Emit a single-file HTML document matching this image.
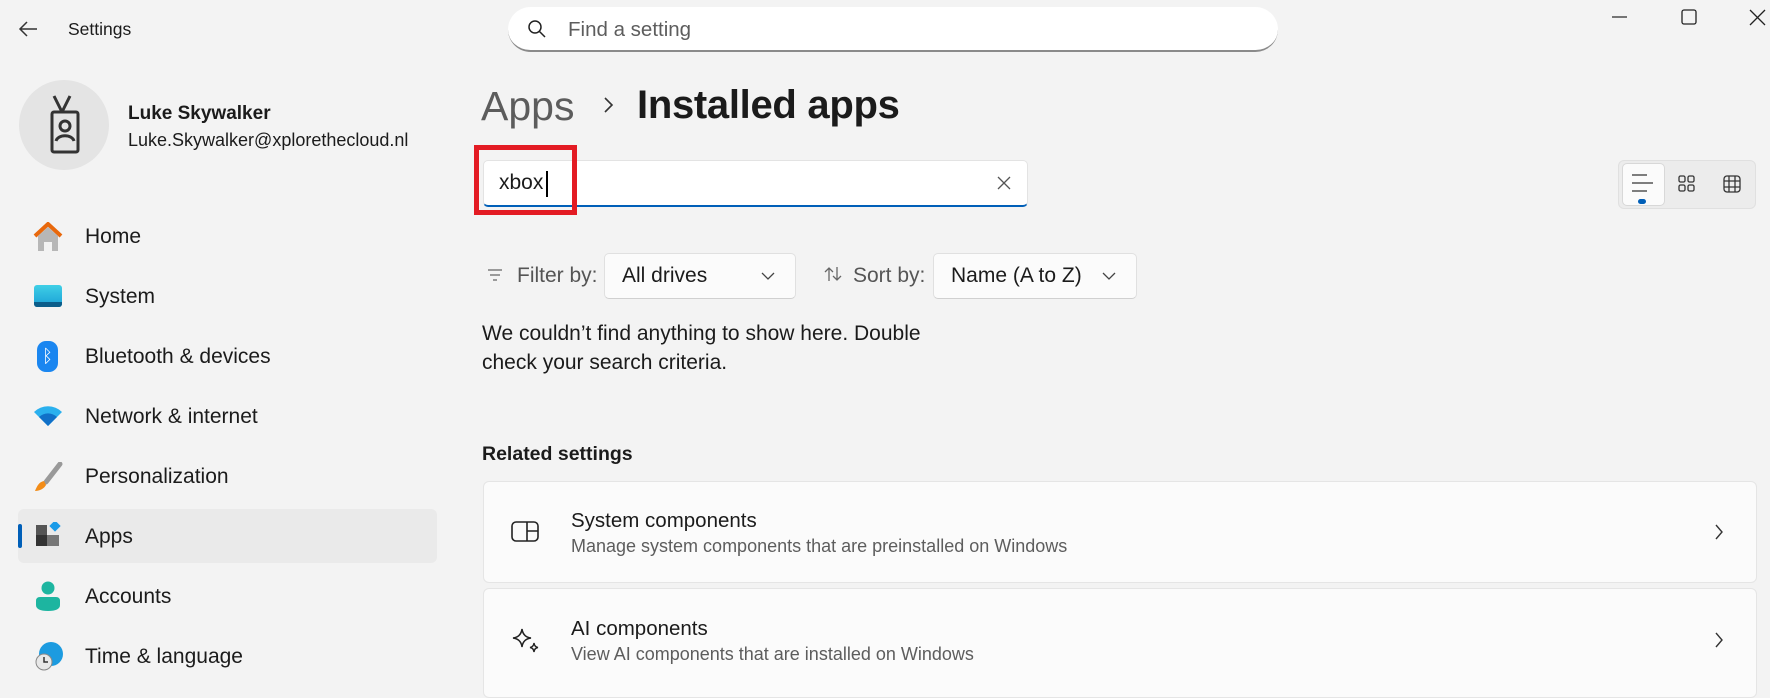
<!DOCTYPE html>
<html><head><meta charset="utf-8"><style>
*{margin:0;padding:0;box-sizing:border-box}
body{width:1770px;height:688px;overflow:hidden;background:#f3f3f3;font-family:"Liberation Sans",sans-serif;color:#1b1b1b;position:relative}
.a{position:absolute;white-space:nowrap}
.nav{position:absolute;left:85px;font-size:21px;color:#1b1b1b}
.card{position:absolute;left:483px;width:1274px;background:#fbfbfb;border:1px solid #e5e5e5;border-radius:6px}
.dd{position:absolute;top:253px;height:46px;background:#fbfbfb;border:1px solid #e0e0e0;border-bottom-color:#d0d0d0;border-radius:5px;font-size:21px}
</style></head><body>
<svg class="a" style="left:17px;top:20px" width="22" height="18" viewBox="0 0 22 18"><path d="M20 9H3M10 2L3 9l7 7" stroke="#333" stroke-width="1.5" fill="none"/></svg>
<div class="a" style="left:68px;top:19px;font-size:17.5px">Settings</div>
<div class="a" style="left:508px;top:7px;width:770px;height:45px;background:#fff;border-radius:23px;border-bottom:2px solid #8a8a8a"></div>
<svg class="a" style="left:527px;top:19px" width="20" height="20" viewBox="0 0 20 20"><circle cx="8" cy="8" r="6" stroke="#222" stroke-width="1.5" fill="none"/><path d="M12.5 12.5L18 18" stroke="#222" stroke-width="1.5"/></svg>
<div class="a" style="left:568px;top:18px;font-size:20.5px;color:#5d5d5d">Find a setting</div>
<svg class="a" style="left:1610px;top:8px" width="160" height="20"><path d="M2 9h15" stroke="#222" stroke-width="1.2"/><rect x="72" y="2" width="14" height="14" rx="2" stroke="#222" stroke-width="1.3" fill="none"/><path d="M140 2l15 15M155 2l-15 15" stroke="#222" stroke-width="1.3"/></svg>
<div class="a" style="left:19px;top:80px;width:90px;height:90px;border-radius:50%;background:#e4e4e4"></div>
<svg class="a" style="left:45px;top:94px" width="38" height="62" viewBox="0 0 36 62"><path d="M8 2l8 16M24 2l-8 16" stroke="#333" stroke-width="3" fill="none"/><rect x="6" y="18" width="26" height="40" rx="2" stroke="#333" stroke-width="3" fill="none"/><circle cx="19" cy="32" r="5" stroke="#333" stroke-width="3" fill="none"/><path d="M10 47c2-7 16-7 18 0" stroke="#333" stroke-width="3" fill="none"/></svg>
<div class="a" style="left:128px;top:103px;font-size:19px;font-weight:bold">Luke Skywalker</div>
<div class="a" style="left:128px;top:130px;font-size:18px">Luke.Skywalker@xplorethecloud.nl</div>
<div class="a" style="left:18px;top:509px;width:419px;height:54px;background:#eaeaea;border-radius:6px"></div>
<div class="a" style="left:18px;top:524px;width:4px;height:24px;background:#005fb8;border-radius:2px"></div>
<svg class="a" style="left:33px;top:222px" width="30" height="30"><path d="M2 14L15 2l13 12" stroke="#e8680c" stroke-width="4" fill="none"/><path d="M5 14l10-9 10 9v15H19v-9h-8v9H5z" fill="#b7b7b7"/></svg>
<div class="a" style="left:34px;top:285px;width:28px;height:22px;border-radius:3px;background:linear-gradient(#3fcfe6,#1a9fd6)"></div><div class="a" style="left:34px;top:302px;width:28px;height:5px;background:#0b5d8a;border-radius:0 0 3px 3px"></div>
<div class="a" style="left:37px;top:341px;width:21px;height:31px;border-radius:9px;background:#1a86f0;color:#fff;font-size:18px;text-align:center;line-height:31px">ᛒ</div>
<svg class="a" style="left:33px;top:405px" width="30" height="22"><path d="M1 7a20 20 0 0 1 28 0L15 21z" fill="#2ab0ee"/><path d="M6 12a13 13 0 0 1 18 0L15 21z" fill="#1070c8"/></svg>
<svg class="a" style="left:33px;top:462px" width="30" height="30"><path d="M27 2L13 20" stroke="#999" stroke-width="5" stroke-linecap="round"/><path d="M11 19c-5 1-7 5-9 10 4 0 9-2 11-6z" fill="#f28c18"/></svg>
<svg class="a" style="left:36px;top:522px" width="26" height="26"><rect x="0" y="3" width="11" height="10" fill="#555"/><rect x="0" y="13" width="11" height="11" fill="#333"/><rect x="11" y="13" width="12" height="11" fill="#777"/><rect x="15" y="0" width="8" height="8" transform="rotate(45 19 4)" fill="#1a9be8"/></svg>
<svg class="a" style="left:36px;top:581px" width="24" height="32"><circle cx="12" cy="7" r="6.5" fill="#1db5a0"/><path d="M0 20q0-4 4-4h16q4 0 4 4v4q0 6-12 6T0 24z" fill="#1db5a0"/></svg>
<svg class="a" style="left:33px;top:641px" width="30" height="30"><circle cx="18" cy="13" r="12" fill="#1c9be0"/><circle cx="11" cy="21" r="8" fill="#e8e8e8" stroke="#888"/><path d="M11 16v5h4" stroke="#333" stroke-width="1.5" fill="none"/></svg>
<div class="nav" style="top:225px">Home</div>
<div class="nav" style="top:285px">System</div>
<div class="nav" style="top:345px">Bluetooth &amp; devices</div>
<div class="nav" style="top:405px">Network &amp; internet</div>
<div class="nav" style="top:465px">Personalization</div>
<div class="nav" style="top:525px">Apps</div>
<div class="nav" style="top:585px">Accounts</div>
<div class="nav" style="top:645px">Time &amp; language</div>
<div class="a" style="left:481px;top:83px;font-size:41px;color:#5c5c5c">Apps</div>
<svg class="a" style="left:603px;top:96px" width="12" height="18"><path d="M2 2l7 7-7 7" stroke="#333" stroke-width="1.6" fill="none"/></svg>
<div class="a" style="left:637px;top:83px;font-size:40px;font-weight:bold;letter-spacing:-0.3px">Installed apps</div>
<div class="a" style="left:483px;top:160px;width:545px;height:47px;background:#fff;border:1px solid #e3e3e3;border-radius:5px;border-bottom:2px solid #005fb8"></div>
<div class="a" style="left:499px;top:171px;font-size:21px">xbox</div>
<div class="a" style="left:546px;top:171px;width:1.5px;height:26px;background:#000"></div>
<svg class="a" style="left:997px;top:176px" width="14" height="14"><path d="M1 1l12 12M13 1L1 13" stroke="#555" stroke-width="1.3"/></svg>
<div class="a" style="left:474px;top:145px;width:103px;height:70px;border:5px solid #e31b23"></div>
<div class="a" style="left:1618px;top:160px;width:138px;height:49px;background:#ececec;border:1px solid #e0e0e0;border-radius:6px"></div>
<div class="a" style="left:1622px;top:163px;width:43px;height:43px;background:#fbfbfb;border:1px solid #d8d8d8;border-radius:5px"></div>
<svg class="a" style="left:1630px;top:173px" width="120" height="34"><path d="M2 2h15M2 10h21M2 18h15" stroke="#333" stroke-width="1.3"/><rect x="8" y="26" width="8" height="5" rx="2.5" fill="#005fb8"/><g fill="none" stroke="#333" stroke-width="1.3"><rect x="49" y="3" width="6" height="6" rx="1.5"/><rect x="58" y="3" width="6" height="6" rx="1.5"/><rect x="49" y="12" width="6" height="6" rx="1.5"/><rect x="58" y="12" width="6" height="6" rx="1.5"/><rect x="94" y="3" width="16" height="16" rx="3"/><path d="M99 3v16M105 3v16M94 8h16M94 14h16"/></g></svg>
<svg class="a" style="left:487px;top:268px" width="16" height="14"><path d="M1 2h14M3 7h10M6 12h4" stroke="#666" stroke-width="1.3"/></svg>
<div class="a" style="left:517px;top:264px;font-size:21px;color:#555">Filter by:</div>
<div class="dd" style="left:604px;width:192px"><span class="a" style="left:17px;top:10px">All drives</span><svg class="a" style="left:156px;top:18px" width="14" height="9"><path d="M1 1l6 6 6-6" stroke="#444" stroke-width="1.3" fill="none"/></svg></div>
<svg class="a" style="left:824px;top:266px" width="18" height="16"><path d="M5 15V2M1 6l4-4 4 4M13 1v13M9 10l4 4 4-4" stroke="#666" stroke-width="1.3" fill="none"/></svg>
<div class="a" style="left:853px;top:264px;font-size:21px;color:#555">Sort by:</div>
<div class="dd" style="left:933px;width:204px"><span class="a" style="left:17px;top:10px">Name (A to Z)</span><svg class="a" style="left:168px;top:18px" width="14" height="9"><path d="M1 1l6 6 6-6" stroke="#444" stroke-width="1.3" fill="none"/></svg></div>
<div class="a" style="left:482px;top:319px;font-size:21px;line-height:29px">We couldn’t find anything to show here. Double<br>check your search criteria.</div>
<div class="a" style="left:482px;top:443px;font-size:19.5px;font-weight:bold">Related settings</div>
<div class="card" style="top:481px;height:102px"></div>
<div class="card" style="top:588px;height:110px"></div>
<svg class="a" style="left:511px;top:521px" width="28" height="22"><rect x="1" y="1" width="26" height="19" rx="4" stroke="#222" stroke-width="1.6" fill="none"/><path d="M16 1v19M16 10h11" stroke="#222" stroke-width="1.6"/></svg>
<div class="a" style="left:571px;top:509px;font-size:20.5px">System components</div>
<div class="a" style="left:571px;top:536px;font-size:18px;color:#5d5d5d">Manage system components that are preinstalled on Windows</div>
<svg class="a" style="left:1714px;top:524px" width="10" height="16"><path d="M2 1l6 7-6 7" stroke="#333" stroke-width="1.4" fill="none"/></svg>
<svg class="a" style="left:512px;top:627px" width="30" height="28"><path d="M10 2q1 8 9 9q-8 1-9 9q-1-8-9-9q8-1 9-9z" stroke="#222" stroke-width="1.5" fill="none"/><path d="M22 16q0.5 4 4 4.5q-3.5 0.5-4 4.5q-0.5-4-4-4.5q3.5-0.5 4-4.5z" stroke="#222" stroke-width="1.4" fill="none"/></svg>
<div class="a" style="left:571px;top:617px;font-size:20.5px">AI components</div>
<div class="a" style="left:571px;top:644px;font-size:18px;color:#5d5d5d">View AI components that are installed on Windows</div>
<svg class="a" style="left:1714px;top:632px" width="10" height="16"><path d="M2 1l6 7-6 7" stroke="#333" stroke-width="1.4" fill="none"/></svg>
</body></html>
